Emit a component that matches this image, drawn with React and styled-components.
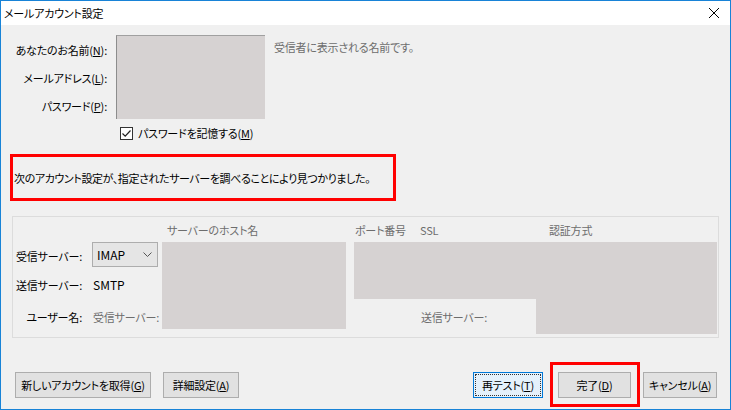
import React from "react"
import styled, {createGlobalStyle} from "styled-components"

const Global = createGlobalStyle`
  html, body {
    margin: 0;
    padding: 0;
    background: #fff;
  }
  * {
    box-sizing: border-box;
  }
`

const Window = styled.div`
  width: 731px;
  height: 410px;
  border: 1px solid #1883d7;
  display: flex;
  flex-direction: column;
  font-family: "Noto Sans CJK JP", "Noto Sans", sans-serif;
  font-size: 11px;
  letter-spacing: -0.2px;
  font-feature-settings: "palt";
  color: #000;
  background: #f0f0f0;
  overflow: hidden;
`
const TitleBar = styled.div`
  height: 24px;
  background: #fff;
  display: flex;
  align-items: center;
  justify-content: space-between;
  padding: 0 10px 0 3px;
`
const Title = styled.span`
  font-size: 11px;
`
const Close = styled.div`
  width: 12px;
  height: 12px;
  display: flex;
`
const Body = styled.div`
  flex: 1;
  display: flex;
  flex-direction: column;
  padding-top: 10px;
`
const Identity = styled.div`
  display: grid;
  grid-template-columns: 106px 149px auto;
  grid-auto-rows: 28px;
  column-gap: 9px;
`
const Label = styled.label`
  display: flex;
  align-items: center;
  justify-content: flex-end;
  padding-top: 2px;
  white-space: nowrap;
`
const Field = styled.div`
  background: #d6d2d2;
  border-left: 1px solid #8d8d8d;
  border-top: ${p => (p.$first ? "1px solid #a0a0a0" : "none")};
`
const Hint = styled.div`
  color: #6d6d6d;
  padding-top: 4px;
  white-space: nowrap;
`
const Remember = styled.div`
  margin: 7px 0 0 119px;
  height: 14px;
  display: flex;
  align-items: center;
  gap: 5px;
`
const Check = styled.span`
  width: 13px;
  height: 13px;
  border: 1px solid #333;
  background: #fff;
  display: flex;
  align-items: center;
  justify-content: center;
`
const Notice = styled.div`
  margin: 14px 0 0 9px;
  width: 386px;
  height: 47px;
  border: 3px solid #f00;
  display: flex;
  align-items: center;
  padding-left: 1px;
  letter-spacing: -0.4px;
  white-space: nowrap;
`
const Group = styled.div`
  margin: 15px 11px 0 11px;
  height: 122px;
  border: 1px solid #dcdcdc;
  display: grid;
  grid-template-columns: 79px 70px 184px 8px 182px 181px;
  grid-template-rows: 25px 28px 29px 35px;
`
const Head = styled.div`
  grid-row: 1;
  grid-column: ${p => p.$col};
  padding-left: ${p => p.$pad}px;
  color: #6d6d6d;
  display: flex;
  align-items: center;
  white-space: nowrap;
`
const RowLabel = styled.div`
  grid-column: 1;
  grid-row: ${p => p.$row};
  display: flex;
  align-items: center;
  justify-content: flex-end;
  padding-right: 10px;
  white-space: nowrap;
`
const Value = styled.div`
  grid-column: ${p => p.$col || 2};
  grid-row: ${p => p.$row};
  display: flex;
  align-items: center;
  padding-left: ${p => p.$pad || 1}px;
  color: ${p => (p.$muted ? "#6d6d6d" : "#000")};
  font-size: ${p => (p.$latin ? 12 : 11)}px;
  letter-spacing: ${p => (p.$latin ? 0 : -0.2)}px;
  white-space: nowrap;
`
const Select = styled.div`
  grid-column: 2;
  grid-row: 2;
  width: 66px;
  height: 25px;
  background: #e5e5e5;
  border: 1px solid #adadad;
  display: flex;
  align-items: center;
  justify-content: space-between;
  padding: 0 5px 0 4px;
  font-size: 12px;
  letter-spacing: 0;
`
const Blank = styled.div`
  background: #d6d2d2;
  grid-column: ${p => p.$col};
  grid-row: ${p => p.$row};
  margin-bottom: ${p => p.$mb || 0}px;
`
const Footer = styled.div`
  margin-top: 24px;
  height: 45px;
  display: flex;
  align-items: center;
  padding: 0 13px 0 14px;
`
const Button = styled.button`
  font: inherit;
  letter-spacing: inherit;
  color: #000;
  height: 26px;
  width: ${p => p.$w}px;
  margin-right: ${p => p.$mr || 0}px;
  background: ${p => (p.$focus ? "#e5f1fb" : "#e1e1e1")};
  border: 1px solid ${p => (p.$focus ? "#0078d7" : "#adadad")};
  padding: 0;
  outline: ${p => (p.$focus ? "1px dotted #333" : "none")};
  outline-offset: -3px;
  white-space: nowrap;
`
const Spacer = styled.div`
  flex: 1;
`
const Highlight = styled.div`
  width: 90px;
  height: 45px;
  border: 3px solid #f00;
  display: flex;
  align-items: center;
  padding-left: 5px;
  margin: 0 3px 0 7px;
`
const U = styled.span`
  text-decoration: underline;
`

export default function App() {
  return (
    <>
      <Global />
      <Window>
        <TitleBar>
          <Title>メールアカウント設定</Title>
          <Close>
            <svg width="12" height="12" viewBox="0 0 12 12">
              <path d="M1 1 L11 11 M11 1 L1 11" stroke="#000" strokeWidth="1" fill="none" />
            </svg>
          </Close>
        </TitleBar>
        <Body>
          <Identity>
            <Label>あなたのお名前(<U>N</U>):</Label>
            <Field $first />
            <Hint>受信者に表示される名前です。</Hint>
            <Label>メールアドレス(<U>L</U>):</Label>
            <Field />
            <div />
            <Label>パスワード(<U>P</U>):</Label>
            <Field />
            <div />
          </Identity>
          <Remember>
            <Check>
              <svg width="11" height="11" viewBox="0 0 11 11">
                <path d="M1.5 5.5 L4.2 8.2 L9.5 2.5" stroke="#222" strokeWidth="1.2" fill="none" />
              </svg>
            </Check>
            <span>パスワードを記憶する(<U>M</U>)</span>
          </Remember>
          <Notice>次のアカウント設定が、指定されたサーバーを調べることにより見つかりました。</Notice>
          <Group>
            <Head $col={3} $pad={5}>サーバーのホスト名</Head>
            <Head $col={5} $pad={1}>ポート番号</Head>
            <Head $col={5} $pad={66}>SSL</Head>
            <Head $col={6} $pad={13}>認証方式</Head>

            <RowLabel $row={2}>受信サーバー:</RowLabel>
            <Select>
              <span>IMAP</span>
              <svg width="9" height="5" viewBox="0 0 9 5">
                <path d="M0.5 0.5 L4.5 4.5 L8.5 0.5" stroke="#555" strokeWidth="1" fill="none" />
              </svg>
            </Select>
            <Blank $col="3" $row="2 / 5" $mb={5} />
            <Blank $col="5 / 7" $row="2 / 4" />

            <RowLabel $row={3}>送信サーバー:</RowLabel>
            <Value $row={3} $latin>SMTP</Value>

            <RowLabel $row={4}>ユーザー名:</RowLabel>
            <Value $row={4} $muted>受信サーバー:</Value>
            <Value $row={4} $col={5} $pad={67} $muted>送信サーバー:</Value>
            <Blank $col="6" $row="4" />
          </Group>
          <Footer>
            <Button $w={136} $mr={12}>新しいアカウントを取得(<U>G</U>)</Button>
            <Button $w={76}>詳細設定(<U>A</U>)</Button>
            <Spacer />
            <Button $w={70} $focus>再テスト(<U>T</U>)</Button>
            <Highlight>
              <Button $w={73}>完了(<U>D</U>)</Button>
            </Highlight>
            <Button $w={74}>キャンセル(<U>A</U>)</Button>
          </Footer>
        </Body>
      </Window>
    </>
  )
}
